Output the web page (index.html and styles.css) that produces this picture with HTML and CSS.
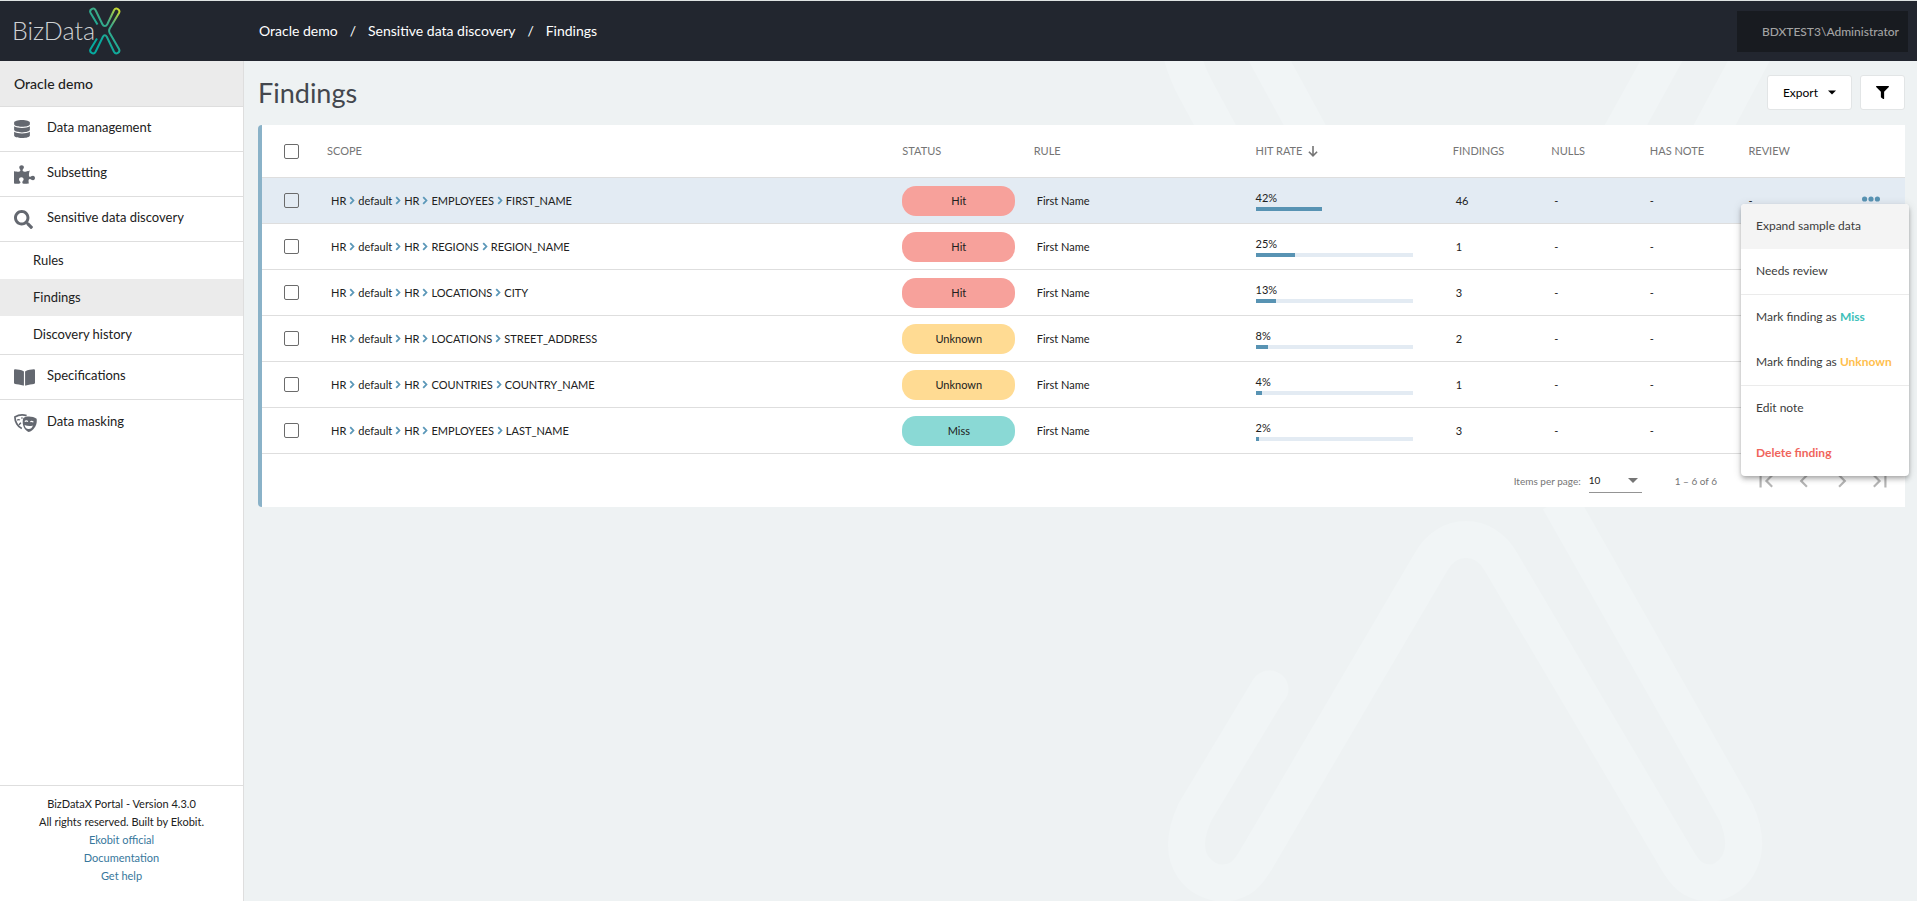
FILE: index.html
```html
<!DOCTYPE html>
<html lang="en">
<head>
<meta charset="utf-8">
<title>BizDataX Portal - Findings</title>
<link rel="stylesheet" href="styles.css">
</head>
<body>
<svg class="sprite" aria-hidden="true">
  <symbol id="sep" viewBox="0 0 6 10"><path d="M1 1.200 4.600 5 1 8.800" fill="none" stroke="currentColor" stroke-width="2"/></symbol>
  <symbol id="dots" viewBox="0 0 18 6"><circle cx="2.600" cy="3" r="2.600"/><circle cx="9" cy="3" r="2.600"/><circle cx="15.400" cy="3" r="2.600"/></symbol>
</svg>
<header class="topbar">
  <a class="logo" href="#" aria-label="BizDataX">
    <span class="logo-text">BizData</span>
    <svg class="logo-mark" viewBox="90 7 32 48" width="32" height="48" aria-hidden="true">
      <defs><linearGradient id="lg" x1="1" y1="0" x2="0.45" y2="0.8"><stop offset="0" stop-color="#d5dc2a"/><stop offset="0.45" stop-color="#45ab84"/><stop offset="1" stop-color="#06a99f"/></linearGradient></defs>
      <path d="M98.500 24.500 91.600 13C89.800 9.600 94.600 6.800 96.600 10.200L103.400 24.200C104.600 26.700 107 26.700 108.300 24.200L115 10.200C117 6.800 121.700 9.600 120 13L110.700 28.500C109.900 30 109.900 31.500 110.700 33L120 49C121.700 52.400 117 55.200 115 51.800L107.800 36.700C106.600 34.600 105 34.600 103.900 36.700L96.600 51.800C94.600 55.200 89.800 52.400 91.600 49L98 38.500" fill="none" stroke="url(#lg)" stroke-width="2"/>
    </svg>
  </a>
  <nav class="crumbs" aria-label="Breadcrumb">
    <a href="#">Oracle demo</a><span>/</span><a href="#">Sensitive data discovery</a><span>/</span><a href="#">Findings</a>
  </nav>
  <button class="user" type="button">BDXTEST3\Administrator</button>
</header>
<div class="shell">
  <aside class="sidebar">
    <h2 class="project">Oracle demo</h2>
    <nav class="menu">
      <a class="item" href="#"><svg viewBox="0 0 448 512" width="16" height="18"><path d="M448 73.143v45.714C448 159.143 347.667 192 224 192S0 159.143 0 118.857V73.143C0 32.857 100.333 0 224 0s224 32.857 224 73.143zM448 176v102.857C448 319.143 347.667 352 224 352S0 319.143 0 278.857V176c48.125 33.143 136.208 48.572 224 48.572S399.874 209.143 448 176zm0 160v102.857C448 479.143 347.667 512 224 512S0 479.143 0 438.857V336c48.125 33.143 136.208 48.572 224 48.572S399.874 369.143 448 336z"/></svg><span>Data management</span></a>
      <a class="item" href="#"><svg viewBox="0 0 576 512" width="21" height="19"><path d="M519.442 288.651c-41.519 0-59.5 31.593-82.058 31.593C377.409 320.244 432 144 432 144s-196.288 80-196.288-3.297c0-35.827 36.288-46.25 36.288-85.985C272 19.216 243.885 0 210.539 0c-34.654 0-66.366 18.891-66.366 56.346 0 41.364 31.711 59.277 31.711 81.75C175.885 207.719 0 166.758 0 166.758v333.237s178.635 41.047 178.635-28.662c0-22.473-40-40.107-40-81.471 0-37.456 29.25-56.346 63.577-56.346 33.673 0 61.788 19.216 61.788 54.717 0 39.735-36.288 50.158-36.288 85.985 0 60.803 129.675 25.73 181.23 25.73 0 0-34.725-120.101 25.827-120.101 35.962 0 46.423 36.152 86.308 36.152C556.712 416 576 387.99 576 354.443c0-34.199-18.962-65.792-56.558-65.792z"/></svg><span>Subsetting</span></a>
      <a class="item" href="#"><svg viewBox="0 0 512 512" width="19" height="19"><path d="M505 442.7L405.3 343c-4.5-4.5-10.600-7-17-7H372c27.600-35.300 44-79.700 44-128C416 93.100 322.900 0 208 0S0 93.100 0 208s93.100 208 208 208c48.300 0 92.700-16.400 128-44v16.300c0 6.400 2.500 12.500 7 17l99.700 99.700c9.400 9.400 24.600 9.400 33.900 0l28.300-28.300c9.400-9.400 9.400-24.600.1-34zM208 336c-70.700 0-128-57.200-128-128 0-70.700 57.200-128 128-128 70.700 0 128 57.200 128 128 0 70.700-57.200 128-128 128z"/></svg><span>Sensitive data discovery</span></a>
      <div class="sub">
        <a href="#">Rules</a>
        <a class="active" href="#">Findings</a>
        <a href="#">Discovery history</a>
      </div>
      <a class="item" href="#"><svg viewBox="0 0 576 512" width="21" height="19"><path d="M542.220 32.050c-54.800 3.110-163.720 14.430-230.960 55.590-4.640 2.840-7.270 7.890-7.270 13.170v363.870c0 11.550 12.630 18.850 23.280 13.490 69.180-34.820 169.230-44.320 218.700-46.920 16.890-.890 30.020-14.430 30.020-30.660V62.750c.010-17.710-15.350-31.740-33.770-30.700zM264.730 87.640C197.500 46.480 88.580 35.170 33.780 32.050 15.360 31.010 0 45.040 0 62.750V400.600c0 16.240 13.130 29.780 30.020 30.660 49.490 2.600 149.590 12.110 218.770 46.950 10.620 5.350 23.210-1.940 23.210-13.460V100.630c0-5.290-2.620-10.140-7.270-12.990z"/></svg><span>Specifications</span></a>
      <a class="item" href="#"><svg viewBox="0 0 23 18" width="23" height="18"><path d="M7.800 14.600C3.600 12.600.9 7.600.9 2.900 4 1.100 9 .5 12.600 1.600" fill="none" stroke="currentColor" stroke-width="1.700"/><path d="M3.200 6.300c.8-.9 2-.9 2.700-.2M5.200 11c.3-1 1-1.800 1.900-2M7.200 4.200l1.500-.4" fill="none" stroke="currentColor" stroke-width="1.300"/><path d="M9.300 3.900C13.500 1.700 18.800 2.300 22.600 4.800 23.600 10.500 20 16.700 14.600 18 9.700 16.300 7.500 9.300 9.300 3.900z"/><path d="M10.900 7.700c.8-1.100 2.200-1.100 2.900 0M16.400 8c.8-1 2.300-.9 2.900.3" fill="none" stroke="#fff" stroke-width="1.200"/><path d="M10.600 11c2.700 1.200 5.500 1.400 8.300.5-.7 2.400-2.300 3.700-4.400 3.600-2-.1-3.500-1.700-3.900-4.100z" fill="#fff"/></svg><span>Data masking</span></a>
    </nav>
    <footer class="about">
      <p>BizDataX Portal - Version 4.3.0</p>
      <p>All rights reserved. Built by Ekobit.</p>
      <a href="#">Ekobit official</a>
      <a href="#">Documentation</a>
      <a href="#">Get help</a>
    </footer>
  </aside>
  <main class="content">
    <svg class="backdrop" viewBox="244 61 1673 840" preserveAspectRatio="xMaxYMin slice" aria-hidden="true">
      <g fill="none" stroke="#f1f5f6" stroke-width="37">
        <path d="M1178 40Q1184 68 1196 90L1250 190M1253 30 1340 190M1673 40 1590 190M1760 40 1680 190"/>
        <path d="M1559 500 1736 812C1758 862 1726 883 1711 883 1692 883 1684 872 1676 858L1501 562C1485 532 1447 532 1431 562L1257 858C1249 872 1241 883 1222 883 1205 883 1171 864 1195 812L1269 689"/>
        <path d="M1269 689h1" stroke-linecap="round"/>
      </g>
    </svg>
    <div class="page-head">
      <h1>Findings</h1>
      <div class="actions">
        <button class="btn export" type="button">Export<svg viewBox="0 0 8 5" width="8" height="5" aria-hidden="true"><path d="M0 .5h8L4 4.500z"/></svg></button>
        <button class="btn filter" type="button" aria-label="Filter"><svg viewBox="0 0 512 512" width="13" height="13"><path d="M487.976 0H24.028C2.710 0-8.047 25.866 7.058 40.971L192 225.941V432c0 7.831 3.821 15.170 10.237 19.662l80 55.980C298.020 518.690 320 507.493 320 487.980V225.941l184.947-184.970C520.021 25.896 509.338 0 487.976 0z"/></svg></button>
      </div>
    </div>
    <section class="card">
      <table class="grid">
        <colgroup><col class="c-check"><col><col class="c-status"><col class="c-rule"><col class="c-rate"><col class="c-num"><col class="c-num"><col class="c-num"><col class="c-num"><col class="c-more"></colgroup>
        <thead>
          <tr><th class="check"><input type="checkbox" aria-label="Select all"></th><th>SCOPE</th><th>STATUS</th><th>RULE</th><th>HIT RATE <svg class="sort" viewBox="0 0 10 11" width="10" height="11" aria-hidden="true"><path d="M5 0v9.500M.9 5.800 5 9.800 9.100 5.800" fill="none" stroke="currentColor" stroke-width="1.600"/></svg></th><th>FINDINGS</th><th>NULLS</th><th>HAS NOTE</th><th>REVIEW</th><th></th></tr>
        </thead>
        <tbody>
          <tr class="selected">
            <td class="check"><input type="checkbox" aria-label="Select FIRST_NAME"></td>
            <td><span class="path">HR<svg><use href="#sep"/></svg>default<svg><use href="#sep"/></svg>HR<svg><use href="#sep"/></svg>EMPLOYEES<svg><use href="#sep"/></svg>FIRST_NAME</span></td>
            <td><span class="pill hit">Hit</span></td><td class="in">First Name</td>
            <td><span class="rate">42%</span><div class="bar"><div style="width:42%"></div></div></td>
            <td class="in">46</td><td class="in">-</td><td>-</td><td>-</td>
            <td class="more">
              <button class="dots" type="button" aria-label="Row actions"><svg width="18" height="6"><use href="#dots"/></svg></button>
              <div class="popup" role="menu">
                <button class="over" type="button" role="menuitem">Expand sample data</button>
                <button type="button" role="menuitem">Needs review</button>
                <hr>
                <button type="button" role="menuitem">Mark finding as <b class="t-miss">Miss</b></button>
                <button type="button" role="menuitem">Mark finding as <b class="t-unknown">Unknown</b></button>
                <hr>
                <button type="button" role="menuitem">Edit note</button>
                <button type="button" role="menuitem"><b class="t-delete">Delete finding</b></button>
              </div>
            </td>
          </tr>
          <tr>
            <td class="check"><input type="checkbox" aria-label="Select REGION_NAME"></td>
            <td><span class="path">HR<svg><use href="#sep"/></svg>default<svg><use href="#sep"/></svg>HR<svg><use href="#sep"/></svg>REGIONS<svg><use href="#sep"/></svg>REGION_NAME</span></td>
            <td><span class="pill hit">Hit</span></td><td class="in">First Name</td>
            <td><span class="rate">25%</span><div class="bar"><div style="width:25%"></div></div></td>
            <td class="in">1</td><td class="in">-</td><td>-</td><td></td><td></td>
          </tr>
          <tr>
            <td class="check"><input type="checkbox" aria-label="Select CITY"></td>
            <td><span class="path">HR<svg><use href="#sep"/></svg>default<svg><use href="#sep"/></svg>HR<svg><use href="#sep"/></svg>LOCATIONS<svg><use href="#sep"/></svg>CITY</span></td>
            <td><span class="pill hit">Hit</span></td><td class="in">First Name</td>
            <td><span class="rate">13%</span><div class="bar"><div style="width:13%"></div></div></td>
            <td class="in">3</td><td class="in">-</td><td>-</td><td></td><td></td>
          </tr>
          <tr>
            <td class="check"><input type="checkbox" aria-label="Select STREET_ADDRESS"></td>
            <td><span class="path">HR<svg><use href="#sep"/></svg>default<svg><use href="#sep"/></svg>HR<svg><use href="#sep"/></svg>LOCATIONS<svg><use href="#sep"/></svg>STREET_ADDRESS</span></td>
            <td><span class="pill unknown">Unknown</span></td><td class="in">First Name</td>
            <td><span class="rate">8%</span><div class="bar"><div style="width:8%"></div></div></td>
            <td class="in">2</td><td class="in">-</td><td>-</td><td></td><td></td>
          </tr>
          <tr>
            <td class="check"><input type="checkbox" aria-label="Select COUNTRY_NAME"></td>
            <td><span class="path">HR<svg><use href="#sep"/></svg>default<svg><use href="#sep"/></svg>HR<svg><use href="#sep"/></svg>COUNTRIES<svg><use href="#sep"/></svg>COUNTRY_NAME</span></td>
            <td><span class="pill unknown">Unknown</span></td><td class="in">First Name</td>
            <td><span class="rate">4%</span><div class="bar"><div style="width:4%"></div></div></td>
            <td class="in">1</td><td class="in">-</td><td>-</td><td></td><td></td>
          </tr>
          <tr>
            <td class="check"><input type="checkbox" aria-label="Select LAST_NAME"></td>
            <td><span class="path">HR<svg><use href="#sep"/></svg>default<svg><use href="#sep"/></svg>HR<svg><use href="#sep"/></svg>EMPLOYEES<svg><use href="#sep"/></svg>LAST_NAME</span></td>
            <td><span class="pill miss">Miss</span></td><td class="in">First Name</td>
            <td><span class="rate">2%</span><div class="bar"><div style="width:2%"></div></div></td>
            <td class="in">3</td><td class="in">-</td><td>-</td><td></td><td></td>
          </tr>
        </tbody>
      </table>
      <div class="pager">
        <label for="size">Items per page:</label>
        <span class="select"><select id="size"><option>10</option></select><svg viewBox="0 0 10 5" width="10" height="5" aria-hidden="true"><path d="M0 0h10L5 5z"/></svg></span>
        <span class="range">1 – 6 of 6</span>
        <button type="button" aria-label="First page"><svg viewBox="0 0 24 24" width="26" height="26"><path d="M18.410 16.590L13.820 12l4.590-4.590L17 6l-6 6 6 6zM6 6h2v12H6z"/></svg></button>
        <button type="button" aria-label="Previous page"><svg viewBox="0 0 24 24" width="26" height="26"><path d="M15.410 7.410L14 6l-6 6 6 6 1.410-1.410L10.830 12z"/></svg></button>
        <button type="button" aria-label="Next page"><svg viewBox="0 0 24 24" width="26" height="26"><path d="M10 6L8.590 7.410 13.170 12l-4.580 4.590L10 18l6-6z"/></svg></button>
        <button type="button" aria-label="Last page"><svg viewBox="0 0 24 24" width="26" height="26"><path d="M5.590 7.410L10.180 12l-4.590 4.590L7 18l6-6-6-6zM16 6h2v12h-2z"/></svg></button>
      </div>
    </section>
  </main>
</div>
</body>
</html>
```

FILE: styles.css
```css
* { box-sizing: border-box; }
body {
  margin: 0;
  min-height: 100vh;
  display: flex;
  flex-direction: column;
  font-family: Lato, "Noto Sans", sans-serif;
  font-size: 13px;
  color: #212121;
  background: #eef2f3;
}
a { color: inherit; text-decoration: none; }
button { font: inherit; color: inherit; border: 0; background: none; padding: 0; cursor: pointer; }
svg { fill: currentColor; flex: none; }
.sprite { display: none; }

/* Top bar */
.topbar {
  display: flex;
  align-items: center;
  height: 61px;
  padding-right: 9px;
  border-top: 1px solid #dfe3e3;
  background: #22262f;
  color: #fff;
}
.logo { display: flex; align-items: center; width: 259px; padding-left: 12px; }
.logo-text { font-size: 25px; font-weight: 300; line-height: 30px; padding-bottom: 3px; color: #d0d2d4; }
.logo-mark { margin-left: -6px; }
.crumbs { display: flex; flex: 1; gap: 12px; padding-bottom: 1px; font-size: 14px; }
.user {
  height: 41px;
  padding: 0 9px 0 25px;
  background: #181b20;
  color: #a3a3a3;
  font-size: 12px;
  font-weight: 500;
}

.shell { flex: 1; display: flex; }

/* Sidebar */
.sidebar {
  display: flex;
  flex-direction: column;
  width: 244px;
  flex: none;
  border-right: 1px solid #dedede;
  background: #fff;
}
.project {
  margin: 0;
  height: 46px;
  padding: 0 14px;
  border-bottom: 1px solid #dedede;
  background: #ebebeb;
  font-size: 14px;
  font-weight: 500;
  line-height: 46px;
}
.menu { flex: 1; }
.item {
  display: grid;
  grid-template-columns: 33px 1fr;
  align-items: center;
  height: 45px;
  padding: 0 14px;
  border-bottom: 1px solid #dedede;
}
.item:last-child { border-bottom: 0; }
.item svg { color: #646870; }
.item span { line-height: 16px; padding-bottom: 4px; }
.sub { padding-bottom: 1px; border-bottom: 1px solid #dedede; }
.sub a { display: block; height: 37px; padding-left: 33px; line-height: 36px; }
.sub .active { background: #ebebeb; }
.about {
  display: flex;
  flex-direction: column;
  align-items: center;
  padding: 9px 0 16px;
  border-top: 1px solid #dedede;
  font-size: 11px;
  line-height: 18px;
}
.about p { margin: 0; }
.about a { color: #37779c; }

/* Content */
.content { position: relative; flex: 1; padding: 0 12px 0 14px; }
.backdrop { position: absolute; inset: 0; width: 100%; height: 100%; }
.page-head {
  position: relative;
  display: flex;
  justify-content: space-between;
  align-items: center;
  height: 64px;
}
h1 { margin: 0; font-size: 27px; font-weight: 400; line-height: 32px; color: #43474e; }
.actions { display: flex; gap: 8px; padding-bottom: 1px; }
.btn {
  display: flex;
  align-items: center;
  justify-content: center;
  height: 35px;
  border: 1px solid #e2e5e6;
  border-radius: 3px;
  background: #fff;
  color: #000;
  font-size: 12px;
}
.export { width: 85px; gap: 10px; }
.filter { width: 45px; }

.card {
  position: relative;
  border-left: 4px solid #8ab2c8;
  border-radius: 4px 0 0 4px;
  background: #fff;
}
.grid { width: 100%; table-layout: fixed; border-collapse: separate; border-spacing: 0; font-size: 11px; }
.c-check { width: 65px; }
.c-status { width: 8%; }
.c-rule { width: 13.5%; }
.c-rate { width: 12%; }
.c-num { width: 6%; }
.c-more { width: 58px; }
.grid th {
  height: 53px;
  padding: 0 0 2px;
  border-bottom: 1px solid #dedede;
  color: #757575;
  font-weight: 400;
  text-align: left;
}
.grid td { height: 46px; padding: 0; border-bottom: 1px solid #dedede; }
.grid .check { padding: 0 0 0 22px; }
.grid .in { padding-left: 3px; }
.selected td { background: #e3ebf3; }
.check input {
  appearance: none;
  display: block;
  width: 15px;
  height: 15px;
  margin: 0;
  border: 1px solid #6b6b6b;
  border-radius: 2px;
}
.sort { margin-left: 3px; vertical-align: -2px; }
.path { display: flex; align-items: center; gap: 3px; padding-left: 4px; }
.path svg { width: 6px; height: 9px; color: #5a97b8; }
.pill { display: block; width: 113px; border-radius: 14px; line-height: 30px; text-align: center; }
.hit { background: #f7a19b; }
.unknown { background: #ffdb93; }
.miss { background: #8ad9d5; }
.rate { display: block; line-height: 14px; padding: 1px 0 2px; }
.bar { width: 80%; height: 4px; background: #e3ebf3; }
.bar div { height: 4px; background: #5893b3; }
.more { position: relative; }
.dots { display: block; margin-left: 15px; padding-bottom: 3px; color: #5893b3; }
.dots svg { display: block; }

/* Row actions */
.popup {
  position: absolute;
  top: 26px;
  right: -4px;
  z-index: 2;
  width: 168px;
  border-radius: 4px;
  background: #fff;
  box-shadow: 0 2px 4px -1px rgba(0, 0, 0, .2), 0 4px 5px rgba(0, 0, 0, .14), 0 1px 10px rgba(0, 0, 0, .12);
  overflow: hidden;
}
.popup button { display: block; width: 100%; height: 45px; padding: 0 15px 2px; font-size: 12px; text-align: left; white-space: nowrap; color: #3c3c3c; }
.popup .over { background: #f4f4f4; }
.popup hr { height: 1px; margin: 0; border: 0; background: #ebebeb; }
.t-miss { color: #3ec1ba; }
.t-unknown { color: #ffc04d; }
.t-delete { color: #f0655c; }

/* Paginator */
.pager {
  display: flex;
  align-items: center;
  justify-content: flex-end;
  height: 53px;
  padding-right: 6px;
  color: #757575;
  font-size: 10px;
}
.select { position: relative; margin: 0 33px 0 8px; }
.select select {
  appearance: none;
  display: block;
  width: 53px;
  height: 24px;
  padding: 0;
  border: 0;
  border-bottom: 1px solid #949494;
  border-radius: 0;
  background: none;
  color: #212121;
  font: inherit;
}
.select svg { position: absolute; right: 4px; top: 9px; }
.range { margin-right: 30px; }
.pager button { display: grid; place-items: center; width: 38px; height: 38px; color: #b5b5b5; }
```
